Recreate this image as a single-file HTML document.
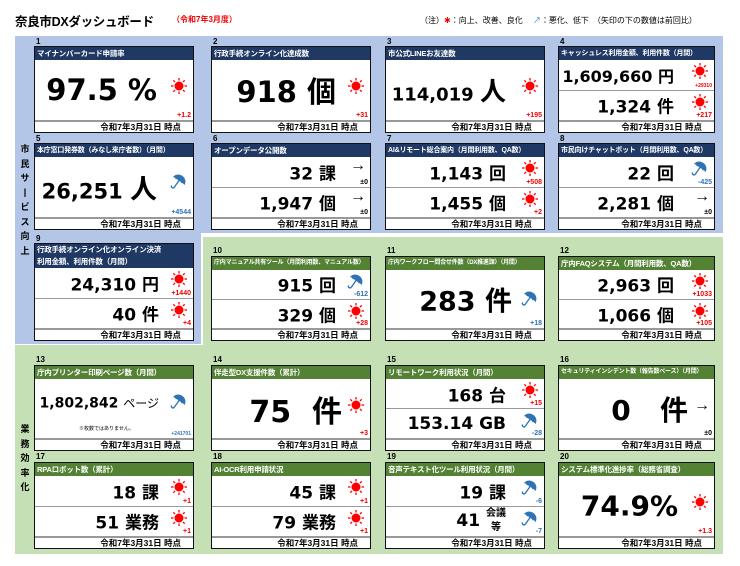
<!DOCTYPE html>
<html><head><meta charset="utf-8"><style>
*{margin:0;padding:0;box-sizing:border-box}
body{width:740px;height:566px;background:#fff;position:relative;overflow:hidden;font-family:"Liberation Sans","Noto Sans CJK JP",sans-serif}
.abs{position:absolute}
.bg-b{background:#b4c6e7}
.bg-g{background:#c5e0b4}
.n{position:absolute;font-size:8px;font-weight:bold;color:#000}
.c{position:absolute;width:160px;border:1px solid #111;background:#fff;display:flex;flex-direction:column}
.h{color:#fff;font-size:7.5px;font-weight:bold;padding-left:2px;white-space:nowrap;overflow:hidden;line-height:13px;height:13px;flex:none;letter-spacing:-0.2px}
.hb{background:#1f3864}.hg{background:#548235}
.body{flex:1;display:flex;flex-direction:column}
.r{flex:1;position:relative;border-top:1px solid #999}
.r:first-child{border-top:none}
.v{position:absolute;right:34px;top:50%;transform:translateY(-50%);font-family:"DejaVu Sans","Noto Sans CJK JP",sans-serif;font-weight:bold;white-space:nowrap;color:#000}
.ic{position:absolute;right:6px;top:3px}
.d{position:absolute;right:2px;bottom:0;font-size:7px;font-weight:bold;color:#e00;line-height:8px}
.d.bl{color:#2e74b5}.d.k{color:#000}
.f{flex:none;height:12px;border-top:2px solid #999;font-size:8.5px;font-weight:bold;text-align:right;padding-right:12px;line-height:10px}
.vt{position:absolute;font-size:9px;font-weight:bold;width:10px;text-align:center;line-height:14.5px;color:#000}
.arr{font-size:16px;font-weight:bold;line-height:14px;position:absolute;right:4px;top:2px;color:#000}
</style></head><body>
<svg width="0" height="0" style="position:absolute"><defs>
<g id="sun"><circle cx="8" cy="8" r="4.5" fill="#f00"/><g stroke="#f00" stroke-width="1.3"><line x1="8" y1="0" x2="8" y2="2.5"/><line x1="8" y1="13.5" x2="8" y2="16"/><line x1="0" y1="8" x2="2.5" y2="8"/><line x1="13.5" y1="8" x2="16" y2="8"/><line x1="2.3" y1="2.3" x2="4" y2="4"/><line x1="12" y1="12" x2="13.7" y2="13.7"/><line x1="2.3" y1="13.7" x2="4" y2="12"/><line x1="12" y1="4" x2="13.7" y2="2.3"/></g></g>
<g id="umb"><g transform="rotate(35 9 9)"><path d="M2 8 A7 6.5 0 0 1 16 8 Q14.2 6.6 12.5 8 Q10.8 6.6 9 8 Q7.2 6.6 5.5 8 Q3.7 6.6 2 8Z" fill="#2e74b5"/><path d="M9 7.5 L9 15 Q9 17 7.3 17 Q5.8 17 5.8 15.5" stroke="#2e74b5" stroke-width="1.3" fill="none"/></g></g>
</defs></svg>

<div class="abs" style="left:15px;top:11px;font-size:12.5px;font-weight:bold;letter-spacing:-0.3px">奈良市DXダッシュボード</div>
<div class="abs" style="left:172px;top:14px;font-size:8px;font-weight:bold;color:#e00">（令和7年3月度）</div>
<div class="abs" style="left:420px;top:15px;font-size:8px;color:#000">（注）<span style="color:#e00">✱</span>：向上、改善、良化　 <span style="color:#2e74b5">↗</span>：悪化、低下　（矢印の下の数値は前回比）</div>

<div class="abs bg-b" style="left:15px;top:36px;width:708px;height:197px"></div>
<div class="abs bg-b" style="left:15px;top:233px;width:186px;height:111px"></div>
<div class="abs bg-g" style="left:203px;top:237px;width:520px;height:108px"></div>
<div class="abs bg-g" style="left:15px;top:345px;width:708px;height:209px"></div>

<div class="vt" style="left:20px;top:142px">市<br>民<br>サ<br>丨<br>ビ<br>ス<br>向<br>上</div>
<div class="vt" style="left:20px;top:422px">業<br>務<br>効<br>率<br>化</div>

<!-- Row 1 -->
<div class="n" style="left:36px;top:37px">1</div>
<div class="c" style="left:34px;top:46px;height:87px"><div class="h hb">マイナンバーカード申請率</div><div class="body"><div class="r"><span class="v" style="font-size:29px;right:36px">97.5 %</span><svg class="ic" style="top:18px" width="16" height="16"><use href="#sun"/></svg><span class="d">+1.2</span></div></div><div class="f">令和7年3月31日 時点</div></div>

<div class="n" style="left:213px;top:37px">2</div>
<div class="c" style="left:211px;top:46px;height:87px"><div class="h hb">行政手続オンライン化達成数</div><div class="body"><div class="r"><span class="v" style="font-size:29px">918 個</span><svg class="ic" style="top:18px" width="16" height="16"><use href="#sun"/></svg><span class="d">+31</span></div></div><div class="f">令和7年3月31日 時点</div></div>

<div class="n" style="left:387px;top:37px">3</div>
<div class="c" style="left:385px;top:46px;height:87px"><div class="h hb">市公式LINEお友達数</div><div class="body"><div class="r"><span class="v" style="font-size:18px;right:38px">114,019 <span style="font-size:26px">人</span></span><svg class="ic" style="top:18px" width="16" height="16"><use href="#sun"/></svg><span class="d">+195</span></div></div><div class="f">令和7年3月31日 時点</div></div>

<div class="n" style="left:560px;top:37px">4</div>
<div class="c" style="left:558px;top:46px;height:87px;width:157px"><div class="h hb" style="font-size:7px">キャッシュレス利用金額、利用件数（月間）</div><div class="body"><div class="r"><span class="v" style="font-size:16px;right:40px">1,609,660 円</span><svg class="ic" width="16" height="16"><use href="#sun"/></svg><span class="d" style="font-size:5px">+29310</span></div><div class="r"><span class="v" style="font-size:17px;right:40px">1,324 件</span><svg class="ic" width="16" height="16"><use href="#sun"/></svg><span class="d">+217</span></div></div><div class="f">令和7年3月31日 時点</div></div>

<!-- Row 2 -->
<div class="n" style="left:36px;top:134px">5</div>
<div class="c" style="left:34px;top:143px;height:87px"><div class="h hb" style="font-size:7px">本庁窓口発券数（みなし来庁者数）（月間）</div><div class="body"><div class="r"><span class="v" style="font-size:21px;right:36px">26,251 <span style="font-size:27px">人</span></span><svg class="ic" style="top:16px" width="18" height="18"><use href="#umb"/></svg><span class="d bl">+4544</span></div></div><div class="f">令和7年3月31日 時点</div></div>

<div class="n" style="left:213px;top:134px">6</div>
<div class="c" style="left:211px;top:143px;height:87px"><div class="h hb">オープンデータ公開数</div><div class="body"><div class="r"><span class="v" style="font-size:17px">32 課</span><span class="arr">→</span><span class="d k">±0</span></div><div class="r"><span class="v" style="font-size:17px">1,947 個</span><span class="arr">→</span><span class="d k">±0</span></div></div><div class="f">令和7年3月31日 時点</div></div>

<div class="n" style="left:387px;top:134px">7</div>
<div class="c" style="left:385px;top:143px;height:87px"><div class="h hb" style="font-size:7px">AI&amp;リモート総合案内（月間利用数、QA数）</div><div class="body"><div class="r"><span class="v" style="font-size:17px;right:38px">1,143 回</span><svg class="ic" width="16" height="16"><use href="#sun"/></svg><span class="d">+508</span></div><div class="r"><span class="v" style="font-size:17px;right:38px">1,455 個</span><svg class="ic" width="16" height="16"><use href="#sun"/></svg><span class="d">+2</span></div></div><div class="f">令和7年3月31日 時点</div></div>

<div class="n" style="left:560px;top:134px">8</div>
<div class="c" style="left:558px;top:143px;height:87px;width:157px"><div class="h hb" style="font-size:7px">市民向けチャットボット（月間利用数、QA数）</div><div class="body"><div class="r"><span class="v" style="font-size:17px;right:40px">22 回</span><svg class="ic" width="18" height="18"><use href="#umb"/></svg><span class="d bl">-425</span></div><div class="r"><span class="v" style="font-size:17px;right:40px">2,281 個</span><span class="arr">→</span><span class="d k">±0</span></div></div><div class="f">令和7年3月31日 時点</div></div>

<!-- Row 3 -->
<div class="n" style="left:36px;top:234px">9</div>
<div class="c" style="left:34px;top:243px;height:98px"><div class="h hb" style="height:24px;line-height:12px;white-space:normal">行政手続オンライン化オンライン決済<br>利用金額、利用件数（月間）</div><div class="body"><div class="r"><span class="v" style="font-size:17px">24,310 円</span><svg class="ic" width="16" height="16"><use href="#sun"/></svg><span class="d">+1440</span></div><div class="r"><span class="v" style="font-size:17px">40 件</span><svg class="ic" width="16" height="16"><use href="#sun"/></svg><span class="d">+4</span></div></div><div class="f">令和7年3月31日 時点</div></div>

<div class="n" style="left:213px;top:246px">10</div>
<div class="c" style="left:211px;top:256px;height:85px"><div class="h hg" style="font-size:6px">庁内マニュアル共有ツール（月間利用数、マニュアル数）</div><div class="body"><div class="r"><span class="v" style="font-size:17px">915 回</span><svg class="ic" width="18" height="18"><use href="#umb"/></svg><span class="d bl">-612</span></div><div class="r"><span class="v" style="font-size:17px">329 個</span><svg class="ic" width="16" height="16"><use href="#sun"/></svg><span class="d">+28</span></div></div><div class="f">令和7年3月31日 時点</div></div>

<div class="n" style="left:387px;top:246px">11</div>
<div class="c" style="left:385px;top:256px;height:85px"><div class="h hg" style="font-size:6px">庁内ワークフロー問合せ件数（DX推進課）（月間）</div><div class="body"><div class="r"><span class="v" style="font-size:27px;right:32px">283 件</span><svg class="ic" style="top:20px" width="18" height="18"><use href="#umb"/></svg><span class="d bl">+18</span></div></div><div class="f">令和7年3月31日 時点</div></div>

<div class="n" style="left:560px;top:246px">12</div>
<div class="c" style="left:558px;top:256px;height:85px;width:157px"><div class="h hg">庁内FAQシステム（月間利用数、QA数）</div><div class="body"><div class="r"><span class="v" style="font-size:17px;right:40px">2,963 回</span><svg class="ic" width="16" height="16"><use href="#sun"/></svg><span class="d">+1033</span></div><div class="r"><span class="v" style="font-size:17px;right:40px">1,066 個</span><svg class="ic" width="16" height="16"><use href="#sun"/></svg><span class="d">+105</span></div></div><div class="f">令和7年3月31日 時点</div></div>

<!-- Row 4 -->
<div class="n" style="left:36px;top:355px">13</div>
<div class="c" style="left:34px;top:365px;height:86px"><div class="h hg">庁内プリンター印刷ページ数（月間）</div><div class="body"><div class="r"><span class="v" style="font-size:14px;right:34px;top:40%">1,802,842 <span style="font-size:12px;font-weight:normal">ページ</span></span><svg class="ic" style="top:14px" width="18" height="18"><use href="#umb"/></svg><span class="abs" style="left:44px;top:46px;font-size:5px">※枚数ではありません。</span><span class="d bl" style="font-size:5px">+241701</span></div></div><div class="f">令和7年3月31日 時点</div></div>

<div class="n" style="left:213px;top:355px">14</div>
<div class="c" style="left:211px;top:365px;height:86px"><div class="h hg">伴走型DX支援件数（累計）</div><div class="body"><div class="r"><span class="v" style="font-size:30px;right:28px">75&nbsp;&nbsp;件</span><svg class="ic" style="top:18px" width="16" height="16"><use href="#sun"/></svg><span class="d">+3</span></div></div><div class="f">令和7年3月31日 時点</div></div>

<div class="n" style="left:387px;top:355px">15</div>
<div class="c" style="left:385px;top:365px;height:86px"><div class="h hg">リモートワーク利用状況（月間）</div><div class="body"><div class="r"><span class="v" style="font-size:17px;right:38px">168 台</span><svg class="ic" width="16" height="16"><use href="#sun"/></svg><span class="d">+15</span></div><div class="r"><span class="v" style="font-size:17px;right:38px">153.14 GB</span><svg class="ic" width="18" height="18"><use href="#umb"/></svg><span class="d bl">-28</span></div></div><div class="f">令和7年3月31日 時点</div></div>

<div class="n" style="left:560px;top:355px">16</div>
<div class="c" style="left:558px;top:365px;height:86px;width:157px"><div class="h hg" style="font-size:6px">セキュリティインシデント数（報告数ベース）（月間）</div><div class="body"><div class="r"><span class="v" style="font-size:28px;right:26px">0&nbsp;&nbsp;&nbsp;件</span><span class="arr" style="top:20px">→</span><span class="d k">±0</span></div></div><div class="f">令和7年3月31日 時点</div></div>

<!-- Row 5 -->
<div class="n" style="left:36px;top:452px">17</div>
<div class="c" style="left:34px;top:462px;height:87px"><div class="h hg">RPAロボット数（累計）</div><div class="body"><div class="r"><span class="v" style="font-size:17px">18 課</span><svg class="ic" width="16" height="16"><use href="#sun"/></svg><span class="d">+1</span></div><div class="r"><span class="v" style="font-size:17px">51 業務</span><svg class="ic" width="16" height="16"><use href="#sun"/></svg><span class="d">+1</span></div></div><div class="f">令和7年3月31日 時点</div></div>

<div class="n" style="left:213px;top:452px">18</div>
<div class="c" style="left:211px;top:462px;height:87px"><div class="h hg">AI-OCR利用申請状況</div><div class="body"><div class="r"><span class="v" style="font-size:17px">45 課</span><svg class="ic" width="16" height="16"><use href="#sun"/></svg><span class="d">+1</span></div><div class="r"><span class="v" style="font-size:17px">79 業務</span><svg class="ic" width="16" height="16"><use href="#sun"/></svg><span class="d">+1</span></div></div><div class="f">令和7年3月31日 時点</div></div>

<div class="n" style="left:387px;top:452px">19</div>
<div class="c" style="left:385px;top:462px;height:87px"><div class="h hg">音声テキスト化ツール利用状況（月間）</div><div class="body"><div class="r"><span class="v" style="font-size:17px;right:38px">19 課</span><svg class="ic" width="18" height="18"><use href="#umb"/></svg><span class="d bl">-6</span></div><div class="r"><span class="v" style="font-size:17px;right:38px">41 <span style="display:inline-block;font-size:10px;line-height:14px;text-align:center;vertical-align:middle">会議<br>等</span></span><svg class="ic" width="18" height="18"><use href="#umb"/></svg><span class="d bl">-7</span></div></div><div class="f">令和7年3月31日 時点</div></div>

<div class="n" style="left:560px;top:452px">20</div>
<div class="c" style="left:558px;top:462px;height:87px;width:157px"><div class="h hg">システム標準化進捗率（総務省調査）</div><div class="body"><div class="r"><span class="v" style="font-size:28px;right:36px">74.9%</span><svg class="ic" style="top:18px" width="16" height="16"><use href="#sun"/></svg><span class="d">+1.3</span></div></div><div class="f">令和7年3月31日 時点</div></div>
</body></html>
